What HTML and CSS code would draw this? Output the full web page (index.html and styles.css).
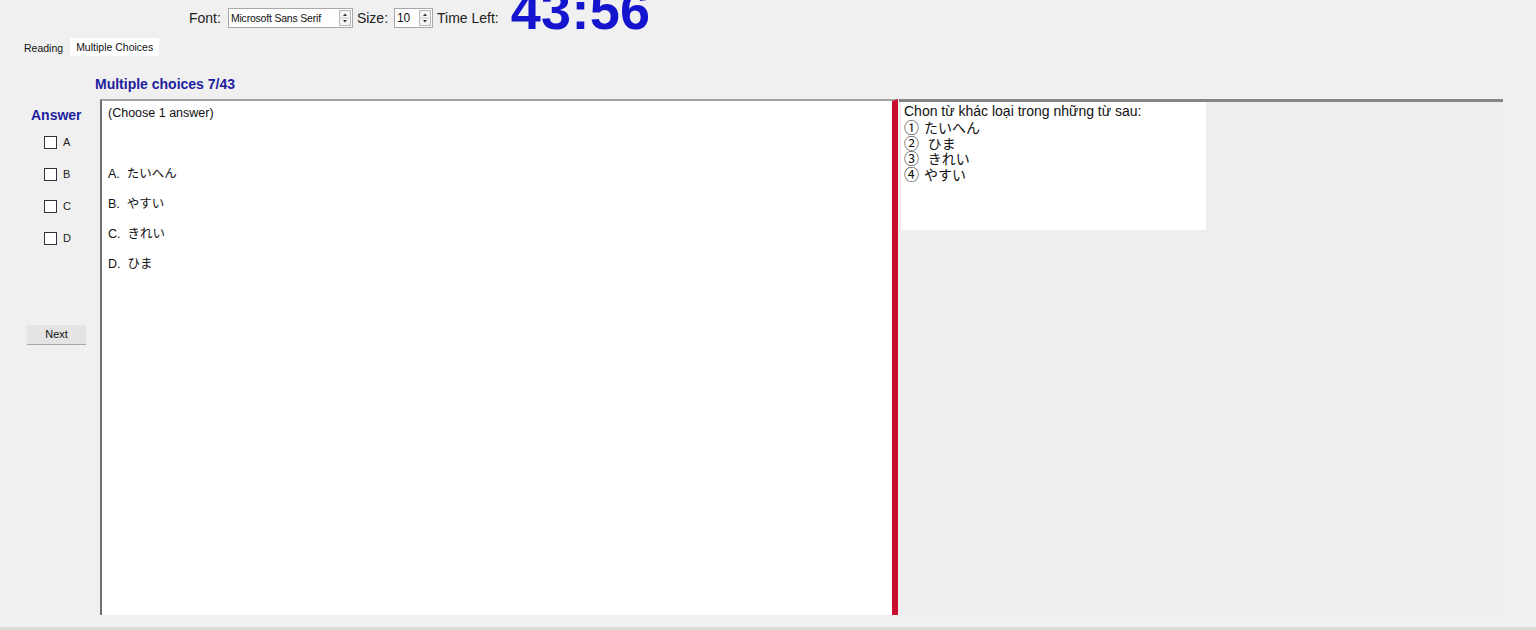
FILE: index.html
```html
<!DOCTYPE html>
<html>
<head>
<meta charset="utf-8">
<link rel="stylesheet" href="styles.css">
</head>
<body>
<div class="toolbar">
  <span class="lbl">Font:</span>
  <div class="combo font-combo">
    <span class="combo-text">Microsoft Sans Serif</span>
    <span class="spin"><svg width="12" height="16" viewBox="0 0 12 16"><rect x="0.5" y="0.5" width="11" height="15" fill="#f4f4f4" stroke="#b8b8b8"/><line x1="1" y1="8" x2="11" y2="8" stroke="#c8c8c8"/><path d="M4 6 L6 3.5 L8 6 Z" fill="#333"/><path d="M4 10 L6 12.5 L8 10 Z" fill="#333"/></svg></span>
  </div>
  <span class="lbl lbl-size">Size:</span>
  <div class="combo size-combo">
    <span class="combo-text">10</span>
    <span class="spin"><svg width="12" height="16" viewBox="0 0 12 16"><rect x="0.5" y="0.5" width="11" height="15" fill="#f4f4f4" stroke="#b8b8b8"/><line x1="1" y1="8" x2="11" y2="8" stroke="#c8c8c8"/><path d="M4 6 L6 3.5 L8 6 Z" fill="#333"/><path d="M4 10 L6 12.5 L8 10 Z" fill="#333"/></svg></span>
  </div>
  <span class="lbl lbl-time">Time Left:</span>
  <span class="timer">43:56</span>
</div>

<div class="tabs">
  <span class="tab">Reading</span>
  <span class="tab tab-active">Multiple Choices</span>
</div>

<div class="title">Multiple choices 7/43</div>

<div class="main">
  <div class="sidebar">
    <div class="answer-lbl">Answer</div>
    <div class="checks">
      <label class="check"><span class="box"></span><span>A</span></label>
      <label class="check"><span class="box"></span><span>B</span></label>
      <label class="check"><span class="box"></span><span>C</span></label>
      <label class="check"><span class="box"></span><span>D</span></label>
    </div>
    <div class="next-btn">Next</div>
  </div>

  <div class="question">
    <div class="choose">(Choose 1 answer)</div>
    <div class="options">
      <div class="opt">A.&nbsp; たいへん</div>
      <div class="opt">B.&nbsp; やすい</div>
      <div class="opt">C.&nbsp; きれい</div>
      <div class="opt">D.&nbsp; ひま</div>
    </div>
  </div>

  <div class="reading">
    <div class="reading-box">
      <div class="rl">Chon từ khác loại trong những từ sau:</div>
      <div class="rl"><span class="num">①</span> たいへん</div>
      <div class="rl"><span class="num">②</span>  ひま</div>
      <div class="rl"><span class="num">③</span>  きれい</div>
      <div class="rl"><span class="num">④</span> やすい</div>
    </div>
  </div>
</div>
<div class="bottom-line"></div>
</body>
</html>
```

FILE: styles.css
```css
html, body {
  margin: 0;
  padding: 0;
}
body {
  width: 1536px;
  height: 630px;
  overflow: hidden;
  background: #f0f0f0;
  font-family: "Liberation Sans", Arial, "Noto Sans CJK JP", sans-serif;
  color: #111;
  display: flex;
  flex-direction: column;
}

.toolbar {
  height: 38px;
  display: flex;
  align-items: flex-start;
  padding: 8px 0 0 189px;
  box-sizing: border-box;
}
.lbl {
  font-size: 14px;
  line-height: 20px;
  color: #222;
}
.combo {
  height: 20px;
  box-sizing: border-box;
  border: 1px solid #a8a8a8;
  background: #fff;
  display: flex;
  align-items: center;
  justify-content: space-between;
  padding: 0 1px 0 2px;
}
.font-combo {
  width: 125px;
  margin-left: 7px;
}
.size-combo {
  width: 39px;
  margin-left: 6px;
}
.lbl-size { margin-left: 4px; }
.lbl-time { margin-left: 4px; }
.combo-text {
  font-size: 10.5px;
  color: #111;
  letter-spacing: -0.2px;
}
.size-combo .combo-text {
  font-size: 12px;
}
.spin {
  display: flex;
  align-items: center;
}
.spin svg { display: block; }

.timer {
  margin-left: 12px;
  margin-top: -25px;
  font-size: 54px;
  line-height: 54px;
  font-weight: bold;
  color: #1414cf;
  letter-spacing: 0.3px;
}

.tabs {
  height: 20px;
  display: flex;
  align-items: flex-start;
  padding-left: 20px;
}
.tab {
  font-size: 10.5px;
  line-height: 16px;
  padding: 0 4px;
  margin-top: 2px;
  color: #111;
}
.tab-active {
  background: #fff;
  line-height: 18px;
  padding: 0 6px;
  margin-left: 3px;
  margin-top: 0;
}

.title {
  margin-top: 18px;
  padding-left: 95px;
  font-size: 14px;
  font-weight: bold;
  color: #1e1e9e;
  line-height: 16px;
}

.main {
  margin-top: 7px;
  display: flex;
  height: 516px;
}

.sidebar {
  width: 100px;
  flex: none;
  display: flex;
  flex-direction: column;
}
.answer-lbl {
  margin-top: 8px;
  padding-left: 31px;
  font-size: 14px;
  line-height: 16px;
  font-weight: bold;
  color: #1e1e9e;
}
.checks {
  margin-top: 3px;
  padding-left: 44px;
  display: flex;
  flex-direction: column;
}
.check {
  height: 32px;
  display: flex;
  align-items: center;
  gap: 6px;
  font-size: 11px;
  color: #222;
}
.box {
  width: 13px;
  height: 13px;
  box-sizing: border-box;
  border: 1px solid #333;
  background: #fff;
}
.next-btn {
  margin-top: 71px;
  margin-left: 27px;
  width: 59px;
  height: 20px;
  box-sizing: border-box;
  background: #e4e4e4;
  border-bottom: 1px solid #a8a8a8;
  font-size: 11px;
  line-height: 19px;
  text-align: center;
  color: #111;
}

.question {
  width: 798px;
  flex: none;
  box-sizing: border-box;
  background: #fff;
  border-left: 2px solid #6e6e6e;
  border-top: 2px solid #a3a3a3;
  border-right: 6px solid #c8102e;
  padding: 4px 0 0 6px;
  font-size: 12.5px;
  color: #111;
}
.choose {
  line-height: 16px;
}
.options {
  margin-top: 38px;
}
.opt {
  height: 30px;
  line-height: 30px;
}

.reading {
  width: 604px;
  flex: none;
  margin-left: 1px;
  border-top: 3px solid #858585;
  box-sizing: border-box;
  padding-left: 2px;
  background: #eeeef0;
  height: 516px;
}
.reading-box {
  width: 305px;
  height: 128px;
  box-sizing: border-box;
  background: #fff;
  padding: 2px 0 0 3px;
  font-size: 14px;
  color: #111;
}
.rl {
  height: 15.8px;
  line-height: 15.8px;
  white-space: pre;
}
.num {
  font-size: 15px;
  line-height: 15px;
  margin-right: 1px;
}

.bottom-line {
  margin-top: auto;
  height: 3px;
  background: #dadada;
}
```
